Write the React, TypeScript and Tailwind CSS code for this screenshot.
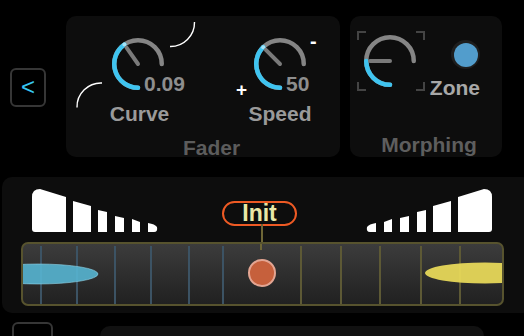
import React from "react";

const PI = Math.PI;
function pt(cx: number, cy: number, r: number, a: number): [number, number] {
  const t = (a * PI) / 180;
  return [cx + r * Math.sin(t), cy - r * Math.cos(t)];
}
function arc(cx: number, cy: number, r: number, a0: number, a1: number) {
  const [x0, y0] = pt(cx, cy, r, a0);
  const [x1, y1] = pt(cx, cy, r, a1);
  const large = a1 - a0 > 180 ? 1 : 0;
  return `M${x0.toFixed(2)} ${y0.toFixed(2)} A${r} ${r} 0 ${large} 1 ${x1.toFixed(2)} ${y1.toFixed(2)}`;
}

function KnobGraphic({ cx, cy, angle, highlight }: { cx: number; cy: number; angle: number; highlight?: boolean }) {
  const [px, py] = pt(cx, cy, 20, angle);
  const [hx, hy] = pt(cx, cy, 23.75, angle);
  return (
    <>
      <path d={arc(cx, cy, 23.75, 180, 450)} stroke="#858585" strokeWidth={4.5} fill="none" strokeLinecap="round" />
      <path d={arc(cx, cy, 23.75, 180, angle)} stroke="#3fc4f0" strokeWidth={4.5} fill="none" strokeLinecap="round" />
      {highlight && <circle cx={hx} cy={hy} r={2} fill="#a6e3f6" />}
      <line x1={cx} y1={cy} x2={px} y2={py} stroke="#7a7a7a" strokeWidth={4} strokeLinecap="round" />
    </>
  );
}

function Knob({ angle, value }: { angle: number; value: string }) {
  return (
    <div className="relative w-[56px] h-[56px]">
      <svg width="56" height="56" viewBox="0 0 56 56" className="block">
        <KnobGraphic cx={28} cy={28} angle={angle} highlight />
      </svg>
      <span className="absolute left-[34px] top-[37px] text-[21px] leading-none font-bold text-[#8e8e8e]">{value}</span>
    </div>
  );
}

const barPaths = [
  "M2 10 Q2 2 10 2 L36 10 L36 45 L5 45 Q2 45 2 42 Z",
  "M43 14 L61 19 L61 45 L43 45 Z",
  "M68 23 L77 25 L77 45 L68 45 Z",
  "M85 29 L94 31 L94 45 L85 45 Z",
  "M102 32 L110 35 L110 45 L102 45 Z",
  "M118 36 Q125 37 127 40 Q128 45 124 45 L118 45 Z",
];

function Bars({ mirror }: { mirror?: boolean }) {
  return (
    <svg width="130" height="47" viewBox="0 0 130 47" className="block shrink-0">
      <g transform={mirror ? "translate(130,0) scale(-1,1)" : undefined} fill="#ffffff">
        {barPaths.map((d, i) => (
          <path key={i} d={d} />
        ))}
      </g>
    </svg>
  );
}

export default function App() {
  const blueLines = [18, 54, 92, 128, 166, 200];
  const yellowLines = [278, 318, 357, 398, 437];
  return (
    <div className="w-[524px] h-[336px] bg-black overflow-hidden font-['Liberation_Sans',Arial,sans-serif]">
      {/* top row */}
      <div className="flex items-start pt-[16px]">
        <div className="w-[66px] shrink-0">
          <div className="ml-[10px] mt-[52px] w-[36px] h-[39px] rounded-[6px] border-2 border-[#363636] flex items-center justify-center">
            <span className="text-[24px] leading-none text-[#38c6f0] -mt-[2px]">&lt;</span>
          </div>
        </div>

        {/* Fader */}
        <div className="relative w-[274px] h-[141px] shrink-0 rounded-[10px] bg-[#0d0d0d] flex flex-col">
          <svg className="absolute left-0 top-0" width="274" height="141" viewBox="0 0 274 141">
            <path d="M104 30.5 A24 24 0 0 0 128.5 6" stroke="#ffffff" strokeWidth={1.4} fill="none" />
            <path d="M11 91.5 A24 24 0 0 1 36 67" stroke="#ffffff" strokeWidth={1.4} fill="none" />
          </svg>
          <div className="flex pt-[20px] pl-[44px]">
            <div className="flex flex-col items-center w-[56px]">
              <Knob angle={325} value="0.09" />
              <span className="mt-[11px] ml-[3px] text-[21px] leading-none font-bold text-[#9a9a9a]">Curve</span>
            </div>
            <div className="relative flex flex-col items-center w-[56px] ml-[86px]">
              <Knob angle={315} value="50" />
              <span className="absolute left-[-16px] top-[44px] text-[19px] leading-none font-bold text-white">+</span>
              <span className="absolute left-[58px] top-[-5px] text-[20px] leading-none font-bold text-white">-</span>
              <span className="mt-[11px] text-[21px] leading-none font-bold text-[#9a9a9a]">Speed</span>
            </div>
          </div>
          <div className="mt-[13px] pl-[17px] text-center text-[21px] leading-none font-bold text-[#5c5c5c]">Fader</div>
        </div>

        {/* Morphing */}
        <div className="ml-[10px] w-[152px] h-[141px] shrink-0 rounded-[10px] bg-[#0d0d0d] flex flex-col">
          <div className="flex pt-[14px] pl-[6px]">
            <svg width="70" height="62" viewBox="0 0 70 62" className="block shrink-0">
              <g stroke="#444444" strokeWidth={2} fill="none">
                <path d="M2 10 L2 2 L10 2" />
                <path d="M60 2 L68 2 L68 10" />
                <path d="M2 52 L2 60 L10 60" />
                <path d="M60 60 L68 60 L68 52" />
              </g>
              <KnobGraphic cx={34} cy={31} angle={270} />
            </svg>
            <div className="ml-[3px] w-[51px] flex flex-col items-end">
              <div className="mt-[10px] w-[29px] h-[29px] rounded-full bg-[#1e1e1e] flex items-center justify-center">
                <div className="w-[24px] h-[24px] rounded-full bg-[#529dcc]" />
              </div>
              <span className="mt-[8px] text-[21px] leading-none font-bold text-[#a8a8a8]">Zone</span>
            </div>
          </div>
          <div className="mt-[36px] pl-[6px] text-center text-[21px] leading-none font-bold text-[#5e5e5e]">Morphing</div>
        </div>
      </div>

      {/* lower panel */}
      <div className="mt-[20px] ml-[2px] w-[530px] h-[136px] rounded-[10px] bg-[#0d0d0d] flex flex-col">
        <div className="flex items-start h-[65px] pt-[10px] pl-[28px]">
          <Bars />
          <div className="relative ml-[62px] mt-[14px] w-[75px] h-[25px] rounded-full border-[2.5px] border-[#ee5a24] bg-[#0d0d0d] flex items-center justify-center">
            <span className="text-[23px] leading-none font-bold text-[#e9e7a6]">Init</span>
            <div className="absolute left-[37px] top-full w-[2px] h-[24px] bg-[#6e6636]" />
          </div>
          <div className="ml-[67px]">
            <Bars mirror />
          </div>
        </div>
        <div className="relative ml-[19px] w-[483px] h-[64px] rounded-[7px] border-2 border-[#57532e] bg-linear-to-b from-[#3c3c3c] to-[#212121] overflow-hidden">
          <svg width="479" height="60" viewBox="0 0 479 60" className="block">
            {blueLines.map((x) => (
              <line key={x} x1={x} y1={2} x2={x} y2={60} stroke="#3c5364" strokeWidth={2} />
            ))}
            {yellowLines.map((x) => (
              <line key={x} x1={x} y1={2} x2={x} y2={60} stroke="#5d5935" strokeWidth={2} />
            ))}
            <ellipse cx={15} cy={30} rx={60} ry={10} fill="#57b5d2" fillOpacity={0.9} stroke="#8fd3e8" strokeOpacity={0.6} strokeWidth={1} />
            <ellipse cx={462} cy={29} rx={60} ry={10.5} fill="#ecdc5a" fillOpacity={0.92} />
            <circle cx={239} cy={29} r={13} fill="#c6603c" stroke="#e3a592" strokeWidth={2} />
          </svg>
          <div className="absolute left-[237px] top-0 w-[2px] h-[6px] bg-[#6e6636]" />
        </div>
      </div>

      {/* bottom row */}
      <div className="flex items-start mt-[9px]">
        <div className="ml-[12px] w-[41px] h-[30px] rounded-[6px] border-2 border-[#363636] shrink-0" />
        <div className="ml-[47px] mt-[4px] w-[384px] h-[40px] rounded-[10px] bg-[#111111] shrink-0" />
      </div>
    </div>
  );
}
